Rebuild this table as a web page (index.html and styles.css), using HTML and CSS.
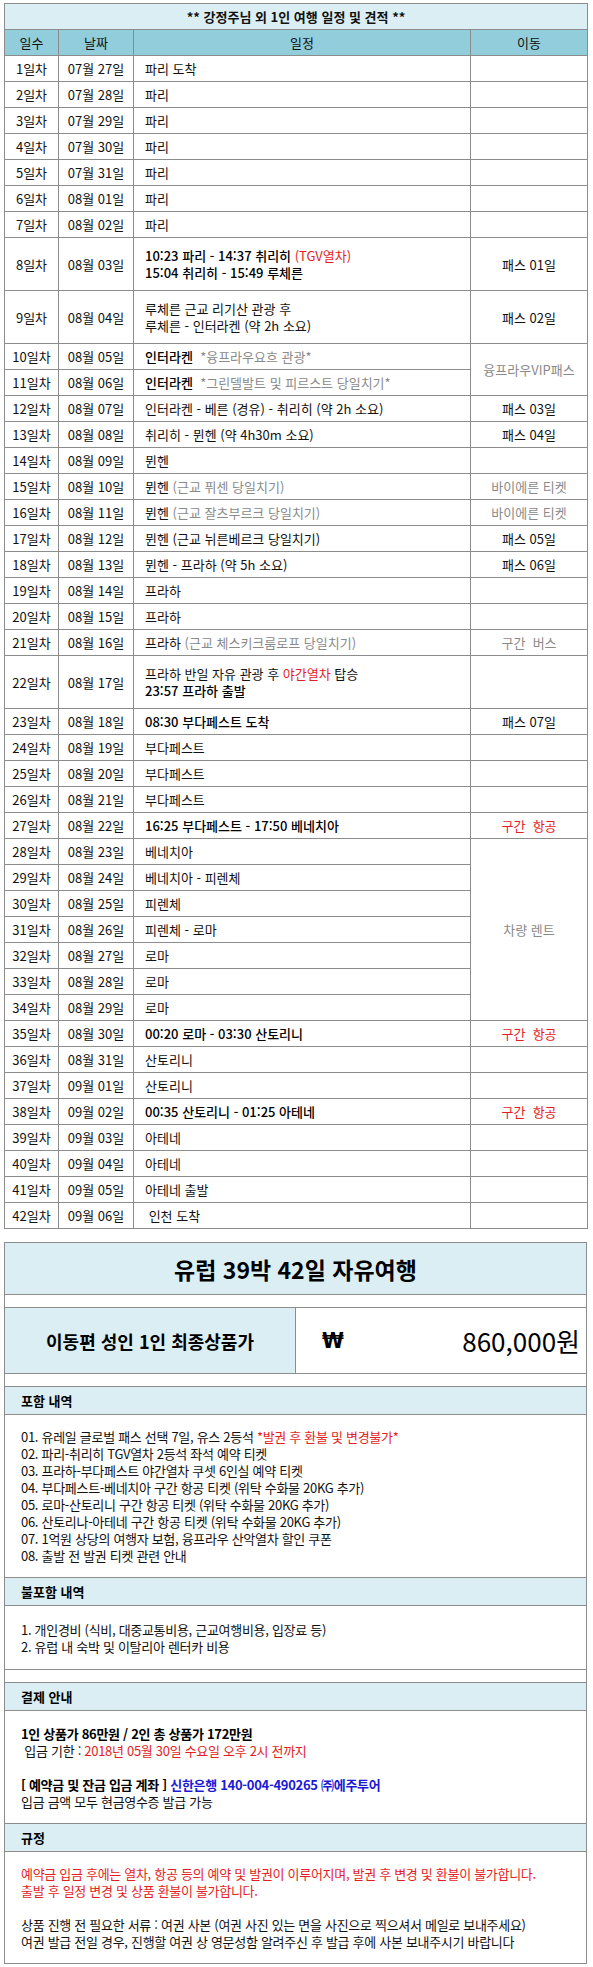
FILE: index.html
```html
<!DOCTYPE html>
<html lang="ko">
<head>
<meta charset="utf-8">
<title>여행 일정 및 견적</title>
<link rel="stylesheet" href="styles.css">
</head>
<body>
<div class="page">
<table class="sched">
<colgroup><col class="c1"><col class="c2"><col class="c3"><col class="c4"></colgroup>
<tr class="title"><td colspan="4">** 강정주님 외 1인 여행 일정 및 견적 **</td></tr>
<tr class="head"><td>일수</td><td>날짜</td><td>일정</td><td>이동</td></tr>
<tr><td>1일차</td><td>07월 27일</td><td class="plan">파리 도착</td><td></td></tr>
<tr><td>2일차</td><td>07월 28일</td><td class="plan">파리</td><td></td></tr>
<tr><td>3일차</td><td>07월 29일</td><td class="plan">파리</td><td></td></tr>
<tr><td>4일차</td><td>07월 30일</td><td class="plan">파리</td><td></td></tr>
<tr><td>5일차</td><td>07월 31일</td><td class="plan">파리</td><td></td></tr>
<tr><td>6일차</td><td>08월 01일</td><td class="plan">파리</td><td></td></tr>
<tr><td>7일차</td><td>08월 02일</td><td class="plan">파리</td><td></td></tr>
<tr class="dbl"><td>8일차</td><td>08월 03일</td><td class="plan"><span class="tm">10:23 파리 - 14:37 취리히</span> <span class="red">(TGV열차)</span><br><span class="tm">15:04 취리히 - 15:49 루체른</span></td><td>패스 01일</td></tr>
<tr class="dbl"><td>9일차</td><td>08월 04일</td><td class="plan">루체른 근교 리기산 관광 후<br>루체른 - 인터라켄 (약 2h 소요)</td><td>패스 02일</td></tr>
<tr><td>10일차</td><td>08월 05일</td><td class="plan"><span class="tm">인터라켄</span> &nbsp;<span class="gray">*융프라우요흐 관광*</span></td><td rowspan="2" class="gray">융프라우VIP패스</td></tr>
<tr><td>11일차</td><td>08월 06일</td><td class="plan"><span class="tm">인터라켄</span> &nbsp;<span class="gray">*그린델발트 및 피르스트 당일치기*</span></td></tr>
<tr><td>12일차</td><td>08월 07일</td><td class="plan">인터라켄 - 베른 (경유) - 취리히 (약 2h 소요)</td><td>패스 03일</td></tr>
<tr><td>13일차</td><td>08월 08일</td><td class="plan">취리히 - 뮌헨 (약 4h30m 소요)</td><td>패스 04일</td></tr>
<tr><td>14일차</td><td>08월 09일</td><td class="plan">뮌헨</td><td></td></tr>
<tr><td>15일차</td><td>08월 10일</td><td class="plan">뮌헨 <span class="gray">(근교 퓌센 당일치기)</span></td><td class="gray">바이에른 티켓</td></tr>
<tr><td>16일차</td><td>08월 11일</td><td class="plan">뮌헨 <span class="gray">(근교 잘츠부르크 당일치기)</span></td><td class="gray">바이에른 티켓</td></tr>
<tr><td>17일차</td><td>08월 12일</td><td class="plan">뮌헨 (근교 뉘른베르크 당일치기)</td><td>패스 05일</td></tr>
<tr><td>18일차</td><td>08월 13일</td><td class="plan">뮌헨 - 프라하 (약 5h 소요)</td><td>패스 06일</td></tr>
<tr><td>19일차</td><td>08월 14일</td><td class="plan">프라하</td><td></td></tr>
<tr><td>20일차</td><td>08월 15일</td><td class="plan">프라하</td><td></td></tr>
<tr><td>21일차</td><td>08월 16일</td><td class="plan">프라하 <span class="gray">(근교 체스키크룸로프 당일치기)</span></td><td class="gray">구간&nbsp;&nbsp;버스</td></tr>
<tr class="dbl"><td>22일차</td><td>08월 17일</td><td class="plan">프라하 반일 자유 관광 후 <span class="red">야간열차</span> 탑승<br><span class="tm">23:57 프라하 출발</span></td><td></td></tr>
<tr><td>23일차</td><td>08월 18일</td><td class="plan"><span class="tm">08:30 부다페스트 도착</span></td><td>패스 07일</td></tr>
<tr><td>24일차</td><td>08월 19일</td><td class="plan">부다페스트</td><td></td></tr>
<tr><td>25일차</td><td>08월 20일</td><td class="plan">부다페스트</td><td></td></tr>
<tr><td>26일차</td><td>08월 21일</td><td class="plan">부다페스트</td><td></td></tr>
<tr><td>27일차</td><td>08월 22일</td><td class="plan"><span class="tm">16:25 부다페스트 - 17:50 베네치아</span></td><td class="red">구간&nbsp;&nbsp;항공</td></tr>
<tr><td>28일차</td><td>08월 23일</td><td class="plan">베네치아</td><td rowspan="7" class="gray">차량 렌트</td></tr>
<tr><td>29일차</td><td>08월 24일</td><td class="plan">베네치아 - 피렌체</td></tr>
<tr><td>30일차</td><td>08월 25일</td><td class="plan">피렌체</td></tr>
<tr><td>31일차</td><td>08월 26일</td><td class="plan">피렌체 - 로마</td></tr>
<tr><td>32일차</td><td>08월 27일</td><td class="plan">로마</td></tr>
<tr><td>33일차</td><td>08월 28일</td><td class="plan">로마</td></tr>
<tr><td>34일차</td><td>08월 29일</td><td class="plan">로마</td></tr>
<tr><td>35일차</td><td>08월 30일</td><td class="plan"><span class="tm">00:20 로마 - 03:30 산토리니</span></td><td class="red">구간&nbsp;&nbsp;항공</td></tr>
<tr><td>36일차</td><td>08월 31일</td><td class="plan">산토리니</td><td></td></tr>
<tr><td>37일차</td><td>09월 01일</td><td class="plan">산토리니</td><td></td></tr>
<tr><td>38일차</td><td>09월 02일</td><td class="plan"><span class="tm">00:35 산토리니 - 01:25 아테네</span></td><td class="red">구간&nbsp;&nbsp;항공</td></tr>
<tr><td>39일차</td><td>09월 03일</td><td class="plan">아테네</td><td></td></tr>
<tr><td>40일차</td><td>09월 04일</td><td class="plan">아테네</td><td></td></tr>
<tr><td>41일차</td><td>09월 05일</td><td class="plan">아테네 출발</td><td></td></tr>
<tr><td>42일차</td><td>09월 06일</td><td class="plan">&nbsp;인천 도착</td><td></td></tr>
</table>

<div class="quote">
  <div class="q-title">유럽 39박 42일 자유여행</div>
  <div class="q-gap"></div>
  <div class="q-price">
    <div class="q-label">이동편 성인 1인 최종상품가</div>
    <div class="q-amount"><span class="won">₩</span><span class="sum">860,000원</span></div>
  </div>
  <div class="q-gap"></div>
  <div class="q-head">포함 내역</div>
  <div class="q-body">
    <div>01. 유레일 글로벌 패스 선택 7일, 유스 2등석 <span class="red">*발권 후 환불 및 변경불가*</span></div>
    <div>02. 파리-취리히 TGV열차 2등석 좌석 예약 티켓</div>
    <div>03. 프라하-부다페스트 야간열차 쿠셋 6인실 예약 티켓</div>
    <div>04. 부다페스트-베네치아 구간 항공 티켓 (위탁 수화물 20KG 추가)</div>
    <div>05. 로마-산토리니 구간 항공 티켓 (위탁 수화물 20KG 추가)</div>
    <div>06. 산토리나-아테네 구간 항공 티켓 (위탁 수화물 20KG 추가)</div>
    <div>07. 1억원 상당의 여행자 보험, 융프라우 산악열차 할인 쿠폰</div>
    <div>08. 출발 전 발권 티켓 관련 안내</div>
  </div>
  <div class="q-head">불포함 내역</div>
  <div class="q-body q-body-ex">
    <div>1. 개인경비 (식비, 대중교통비용, 근교여행비용, 입장료 등)</div>
    <div>2. 유럽 내 숙박 및 이탈리아 렌터카 비용</div>
  </div>
  <div class="q-gap"></div>
  <div class="q-head">결제 안내</div>
  <div class="q-body q-body-pay">
    <div class="strong">1인 상품가 86만원 / 2인 총 상품가 172만원</div>
    <div>&nbsp;입금 기한 : <span class="red">2018년 05월 30일 수요일 오후 2시 전까지</span></div>
    <div class="blank"></div>
    <div class="strong">[ 예약금 및 잔금 입금 계좌 ] <span class="blue">신한은행 140-004-490265 ㈜에주투어</span></div>
    <div>입금 금액 모두 현금영수증 발급 가능</div>
  </div>
  <div class="q-head">규정</div>
  <div class="q-body q-last">
    <div class="red">예약금 입금 후에는 열차, 항공 등의 예약 및 발권이 이루어지며, 발권 후 변경 및 환불이 불가합니다.</div>
    <div class="red">출발 후 일정 변경 및 상품 환불이 불가합니다.</div>
    <div class="blank"></div>
    <div>상품 진행 전 필요한 서류 : 여권 사본 (여권 사진 있는 면을 사진으로 찍으셔서 메일로 보내주세요)</div>
    <div>여권 발급 전일 경우, 진행할 여권 상 영문성함 알려주신 후 발급 후에 사본 보내주시기 바랍니다</div>
  </div>
</div>
</div>
</body>
</html>
```

FILE: styles.css
```css
html, body {
  margin: 0;
  padding: 0;
  background: #ffffff;
}
body {
  font-family: "Noto Sans CJK KR", "Noto Sans", sans-serif;
  font-size: 13px;
  color: #111111;
}
.page {
  padding: 3px 6px 5px 4px;
}

/* schedule table */
.sched {
  width: 100%;
  border-collapse: collapse;
  table-layout: fixed;
}
.c1 { width: 54px; }
.c2 { width: 75px; }
.c3 { width: 337px; }
.c4 { width: 117px; }
.sched td {
  border: 1px solid #8c8c8c;
  padding: 0;
  height: 25px;
  line-height: 17px;
  text-align: center;
  vertical-align: middle;
  white-space: nowrap;
}
.sched tr.dbl td {
  height: 52px;
}
.sched td.plan {
  text-align: left;
  padding-left: 11px;
}
.sched .title td {
  background: #daeef3;
  font-weight: 700;
}
.sched .head td {
  background: #92cddc;
}
.tm {
  font-weight: 500;
  color: #000;
}
.red { color: #e31e24; }
.gray { color: #8a8a8a; }
.blue { color: #1a1ad6; }

/* quote block */
.quote {
  margin-top: 13px;
  border: 1px solid #8c8c8c;
}
.q-title {
  height: 51px;
  display: flex;
  align-items: center;
  justify-content: center;
  background: #daeef3;
  font-size: 23px;
  font-weight: 700;
  color: #000;
  border-bottom: 1px solid #8c8c8c;
}
.q-gap {
  height: 12px;
  border-bottom: 1px solid #8c8c8c;
}
.q-price {
  display: flex;
  height: 65px;
  border-bottom: 1px solid #8c8c8c;
}
.q-label {
  width: 290px;
  flex: none;
  display: flex;
  align-items: center;
  justify-content: center;
  background: #daeef3;
  border-right: 1px solid #8c8c8c;
  font-size: 18px;
  font-weight: 700;
  color: #000;
}
.q-amount {
  flex: 1;
  display: flex;
  align-items: center;
  justify-content: space-between;
  padding: 0 6px 0 26px;
  color: #000;
}
.won {
  font-family: "DejaVu Sans Condensed", "DejaVu Sans", sans-serif;
  font-size: 22px;
  font-weight: 700;
}
.sum {
  font-size: 26px;
}
.q-head {
  height: 27px;
  display: flex;
  align-items: center;
  padding-left: 16px;
  background: #daeef3;
  font-weight: 700;
  color: #000;
  border-bottom: 1px solid #8c8c8c;
}
.q-body {
  padding: 13px 16px 13px 16px;
  line-height: 17px;
  letter-spacing: -0.3px;
  white-space: nowrap;
  border-bottom: 1px solid #8c8c8c;
}
.q-body-ex {
  padding-top: 15px;
  padding-bottom: 14px;
}
.q-body-pay {
  padding-top: 14px;
}
.q-last {
  border-bottom: none;
}
.blank {
  height: 17px;
}
.strong {
  font-weight: 700;
  color: #000;
}
```
